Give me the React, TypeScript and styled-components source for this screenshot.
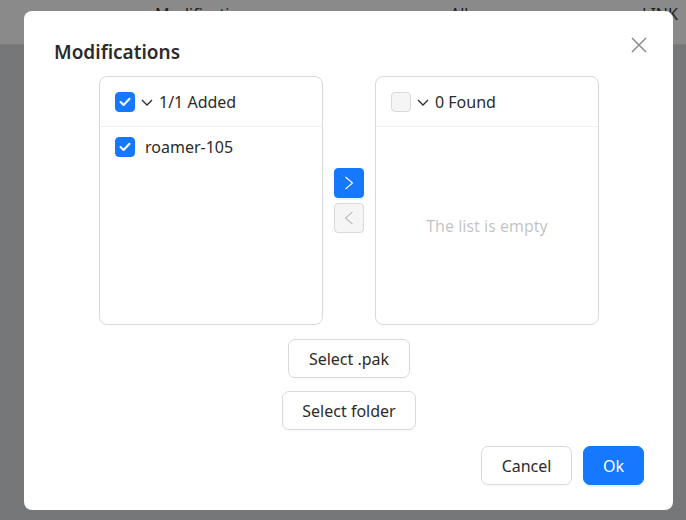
import React, { useState } from 'react';
import styled, { createGlobalStyle } from 'styled-components';

const GlobalStyle = createGlobalStyle`
    html, body {
        margin: 0;
        padding: 0;
        height: 100%;
    }
    body {
        font-family: "Noto Sans", "Open Sans", sans-serif;
        background: #d8d9dc;
        overflow: hidden;
    }
`;

const Page = styled.div`
    height: 520px;
    background: #d8d9dc;
`;

const PageHeader = styled.div`
    height: 45px;
    background: #fbfbfb;
    border-bottom: 1px solid #e4e4e4;
    display: grid;
    grid-template-columns: 40px 115px 138px 157px 87px 105px 1fr;
    align-items: start;
    padding-top: 3px;
    box-sizing: border-box;
    font-size: 16px;
    color: #3a3a3a;
`;

const HeaderCell = styled.span<{ $muted?: boolean }>`
    white-space: nowrap;
    color: ${(p) => (p.$muted ? '#9a9a9a' : '#3a3a3a')};
    font-size: ${(p) => (p.$muted ? '12px' : '16px')};
`;

const Overlay = styled.div`
    position: fixed;
    inset: 0;
    background: rgba(0, 0, 0, 0.45);
`;

const Dialog = styled.div`
    position: fixed;
    left: 24px;
    top: 11px;
    width: 649px;
    height: 499px;
    box-sizing: border-box;
    padding: 28px 29px 25px 30px;
    background: #fff;
    border-radius: 8px;
    display: flex;
    flex-direction: column;
    color: #2b2b2b;
`;

const Title = styled.div`
    font-size: 19px;
    font-weight: 600;
    line-height: 26px;
    color: #2b2b2b;
`;

const CloseButton = styled.button`
    position: absolute;
    top: 26px;
    right: 26px;
    width: 16px;
    height: 16px;
    padding: 0;
    border: none;
    background: none;
    cursor: pointer;
    display: flex;
`;

const TransferRow = styled.div`
    margin-top: 11px;
    display: flex;
    justify-content: center;
    align-items: center;
    gap: 11px;
`;

const ListBox = styled.div`
    width: 224px;
    height: 249px;
    box-sizing: border-box;
    border: 1px solid #d9d9d9;
    border-radius: 8px;
    display: flex;
    flex-direction: column;
`;

const ListHeader = styled.div`
    height: 50px;
    flex-shrink: 0;
    box-sizing: border-box;
    border-bottom: 1px solid #f0f0f0;
    padding: 0 15px;
    display: flex;
    align-items: center;
    font-size: 16px;
`;

const ListBody = styled.div`
    flex: 1;
    display: flex;
    flex-direction: column;
`;

const Item = styled.div`
    height: 40px;
    padding: 0 15px;
    display: flex;
    align-items: center;
    gap: 10px;
    font-size: 16px;
`;

const Empty = styled.div`
    flex: 1;
    display: flex;
    align-items: center;
    justify-content: center;
    font-size: 16px;
    color: rgba(0, 0, 0, 0.25);
`;

const Box = styled.span<{ $checked: boolean }>`
    width: 20px;
    height: 20px;
    box-sizing: border-box;
    border-radius: 4px;
    flex-shrink: 0;
    display: flex;
    align-items: center;
    justify-content: center;
    background: ${(p) => (p.$checked ? '#1677ff' : '#f5f5f5')};
    border: 1px solid ${(p) => (p.$checked ? '#1677ff' : '#d9d9d9')};
`;

const Caret = styled.span`
    display: flex;
    margin: 1px 6px 0 6px;
`;

const Operations = styled.div`
    display: flex;
    flex-direction: column;
    gap: 5px;
`;

const ArrowButton = styled.button<{ $active: boolean }>`
    width: 30px;
    height: 30px;
    padding: 0;
    border-radius: 4px;
    display: flex;
    align-items: center;
    justify-content: center;
    cursor: ${(p) => (p.$active ? 'pointer' : 'not-allowed')};
    background: ${(p) => (p.$active ? '#1677ff' : '#f5f5f5')};
    border: 1px solid ${(p) => (p.$active ? '#1677ff' : '#d9d9d9')};
    box-shadow: ${(p) => (p.$active ? '0 2px 0 rgba(5, 145, 255, 0.1)' : 'none')};
`;

const PickerColumn = styled.div`
    margin-top: 14px;
    display: flex;
    flex-direction: column;
    align-items: center;
    gap: 13px;
`;

const Button = styled.button<{ $primary?: boolean }>`
    height: 39px;
    padding: 0 ${(p) => (p.$primary ? '19px' : '19.5px')};
    font-family: inherit;
    font-size: 16px;
    border-radius: 7px;
    cursor: pointer;
    color: ${(p) => (p.$primary ? '#fff' : '#2b2b2b')};
    background: ${(p) => (p.$primary ? '#1677ff' : '#fff')};
    border: 1px solid ${(p) => (p.$primary ? '#1677ff' : '#d9d9d9')};
    box-shadow: ${(p) =>
        p.$primary ? '0 2px 0 rgba(5, 145, 255, 0.1)' : '0 2px 0 rgba(0, 0, 0, 0.02)'};
`;

const Footer = styled.div`
    margin-top: auto;
    display: flex;
    justify-content: flex-end;
    gap: 11px;
`;

const Check = () => (
    <svg width="12" height="10" viewBox="0 0 12 10">
        <path d="M1.5 5 L4.6 8 L10.5 1.8" fill="none" stroke="#fff" strokeWidth="2" strokeLinecap="round" strokeLinejoin="round" />
    </svg>
);

const ChevronDown = () => (
    <svg width="12" height="7" viewBox="0 0 12 7">
        <path d="M1 1 L6 6 L11 1" fill="none" stroke="#2b2b2b" strokeWidth="1.3" />
    </svg>
);

const Chevron = ({ dir, color }: { dir: 'left' | 'right'; color: string }) => (
    <svg width="10" height="14" viewBox="0 0 10 14">
        <path
            d={dir === 'right' ? 'M1.5 1 L8.5 7 L1.5 13' : 'M8.5 1 L1.5 7 L8.5 13'}
            fill="none"
            stroke={color}
            strokeWidth="1.1"
        />
    </svg>
);

const CloseIcon = () => (
    <svg width="16" height="16" viewBox="0 0 16 16">
        <path d="M1 1 L15 15 M15 1 L1 15" stroke="#8c8c8c" strokeWidth="1.5" />
    </svg>
);

interface TransferListProps {
    title: string;
    items: string[];
    checked: boolean;
}

const TransferList: React.FC<TransferListProps> = ({ title, items, checked }) => (
    <ListBox>
        <ListHeader>
            <Box $checked={checked}>{checked && <Check />}</Box>
            <Caret>
                <ChevronDown />
            </Caret>
            {title}
        </ListHeader>
        <ListBody>
            {items.length === 0 && <Empty>The list is empty</Empty>}
            {items.map((name) => (
                <Item key={name}>
                    <Box $checked>
                        <Check />
                    </Box>
                    {name}
                </Item>
            ))}
        </ListBody>
    </ListBox>
);

const App: React.FC = () => {
    const [added] = useState<string[]>(['roamer-105']);
    const [found] = useState<string[]>([]);

    return (
        <>
            <GlobalStyle />
            <Page>
                <PageHeader>
                    <span />
                    <HeaderCell $muted>⋯</HeaderCell>
                    <HeaderCell>Modifications</HeaderCell>
                    <HeaderCell $muted>⋯</HeaderCell>
                    <HeaderCell>All</HeaderCell>
                    <HeaderCell $muted>⋯</HeaderCell>
                    <HeaderCell>LINK</HeaderCell>
                </PageHeader>
            </Page>
            <Overlay />
            <Dialog>
                <Title>Modifications</Title>
                <CloseButton aria-label="Close">
                    <CloseIcon />
                </CloseButton>
                <TransferRow>
                    <TransferList title={`${added.length}/${added.length} Added`} items={added} checked />
                    <Operations>
                        <ArrowButton $active>
                            <Chevron dir="right" color="#fff" />
                        </ArrowButton>
                        <ArrowButton $active={false}>
                            <Chevron dir="left" color="#bfbfbf" />
                        </ArrowButton>
                    </Operations>
                    <TransferList title={`${found.length} Found`} items={found} checked={false} />
                </TransferRow>
                <PickerColumn>
                    <Button>Select .pak</Button>
                    <Button>Select folder</Button>
                </PickerColumn>
                <Footer>
                    <Button>Cancel</Button>
                    <Button $primary>Ok</Button>
                </Footer>
            </Dialog>
        </>
    );
};

export default App;
